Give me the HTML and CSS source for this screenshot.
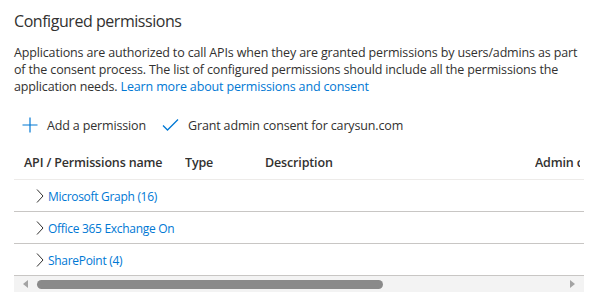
FILE: index.html
```html
<!DOCTYPE html>
<html>
<head>
<meta charset="utf-8">
<link rel="stylesheet" href="styles.css">
</head>
<body>
<div class="page">
  <h2 class="title">Configured permissions</h2>
  <p class="intro">Applications are authorized to call APIs when they are granted permissions by users/admins as part of the consent process. The list of configured permissions should include all the permissions the application needs. <a class="link" href="#">Learn more about permissions and consent</a></p>
  <div class="toolbar">
    <button class="tool">
      <svg class="icon" width="16" height="16" viewBox="0 0 16 16"><path d="M8 0.5V15.5M0.5 8H15.5" stroke="#0078d4" stroke-width="1.2" fill="none"/></svg>
      <span>Add a permission</span>
    </button>
    <button class="tool">
      <svg class="icon" width="17" height="16" viewBox="0 0 17 16"><path d="M1 8.5L5.5 13L16 2.5" stroke="#0078d4" stroke-width="1.3" fill="none"/></svg>
      <span>Grant admin consent for carysun.com</span>
    </button>
  </div>
  <div class="grid-wrap">
    <div class="grid">
      <div class="row head">
        <div class="c c-name">API / Permissions name</div>
        <div class="c c-type">Type</div>
        <div class="c c-desc">Description</div>
        <div class="c c-admin">Admin consent required</div>
        <div class="c c-rest"></div>
      </div>
      <div class="row">
        <div class="c c-name"><svg class="chev" width="8" height="14" viewBox="0 0 8 14"><path d="M1 0.5L7 7L1 13.5" stroke="#323130" stroke-width="1" fill="none"/></svg><a class="link" href="#">Microsoft Graph (16)</a></div>
      </div>
      <div class="row">
        <div class="c c-name"><svg class="chev" width="8" height="14" viewBox="0 0 8 14"><path d="M1 0.5L7 7L1 13.5" stroke="#323130" stroke-width="1" fill="none"/></svg><a class="link" href="#">Office 365 Exchange On</a></div>
      </div>
      <div class="row">
        <div class="c c-name"><svg class="chev" width="8" height="14" viewBox="0 0 8 14"><path d="M1 0.5L7 7L1 13.5" stroke="#323130" stroke-width="1" fill="none"/></svg><a class="link" href="#">SharePoint (4)</a></div>
      </div>
    </div>
    <div class="scrollbar">
      <span class="arrow left"></span>
      <div class="track"><div class="thumb"></div></div>
      <span class="arrow right"></span>
    </div>
  </div>
</div>
</body>
</html>
```
FILE: styles.css
```css
html, body {
  margin: 0;
  padding: 0;
  background: #ffffff;
}
body {
  font-family: "Open Sans", "Noto Sans", sans-serif;
  color: #323130;
  font-size: 13px;
}
.page {
  width: 570px;
  padding: 8px 6px 0 14px;
}
.title {
  margin: 0;
  font-size: 16px;
  font-weight: 400;
  line-height: 26px;
  letter-spacing: -0.45px;
}
.intro {
  margin: 10px 0 0 0;
  line-height: 17px;
  font-size: 12.5px;
  letter-spacing: -0.15px;
}
.link {
  color: #0078d4;
  text-decoration: none;
}
.toolbar {
  display: flex;
  gap: 16px;
  margin-top: 20px;
  padding-left: 8px;
  height: 20px;
  align-items: center;
}
.tool {
  display: flex;
  align-items: center;
  gap: 9px;
  border: 0;
  background: none;
  padding: 0;
  font: inherit;
  font-size: 12.5px;
  letter-spacing: -0.15px;
  color: #323130;
}
.grid-wrap {
  margin-top: 10px;
  width: 570px;
  overflow: hidden;
}
.grid {
  width: 700px;
}
.row {
  display: flex;
  height: 31px;
  align-items: center;
  border-bottom: 1px solid #c8c6c4;
}
.row:not(.head) {
  padding-top: 1px;
  height: 30px;
}
.row.head {
  height: 34px;
  border-bottom-color: #edebe9;
  font-weight: 600;
  font-size: 12.5px;
  letter-spacing: -0.15px;
}
.c {
  white-space: nowrap;
  overflow: hidden;
  flex: none;
}
.c-name {
  width: 161px;
  padding-left: 10px;
  display: flex;
  align-items: center;
  font-size: 12px;
  letter-spacing: -0.3px;
}
.head .c-name {
  font-size: 12.5px;
  letter-spacing: -0.15px;
}
.c-type { width: 80px; }
.c-desc { width: 270px; }
.c-admin { width: 45px; }
.c-rest { width: 100px; }
.chev {
  margin-left: 12px;
  margin-right: 4px;
  flex: none;
}
.scrollbar {
  display: flex;
  align-items: center;
  height: 16px;
  background: #f3f3f3;
}
.arrow {
  width: 0;
  height: 0;
  border-top: 4px solid transparent;
  border-bottom: 4px solid transparent;
  flex: none;
}
.arrow.left {
  border-right: 5px solid #a3a3a3;
  margin-left: 9px;
}
.arrow.right {
  border-left: 5px solid #a3a3a3;
  margin-right: 9px;
}
.track {
  flex: 1;
  padding: 0 0 0 9px;
}
.thumb {
  width: 346px;
  height: 9px;
  border-radius: 5px;
  background: #8a8a8a;
}
```
